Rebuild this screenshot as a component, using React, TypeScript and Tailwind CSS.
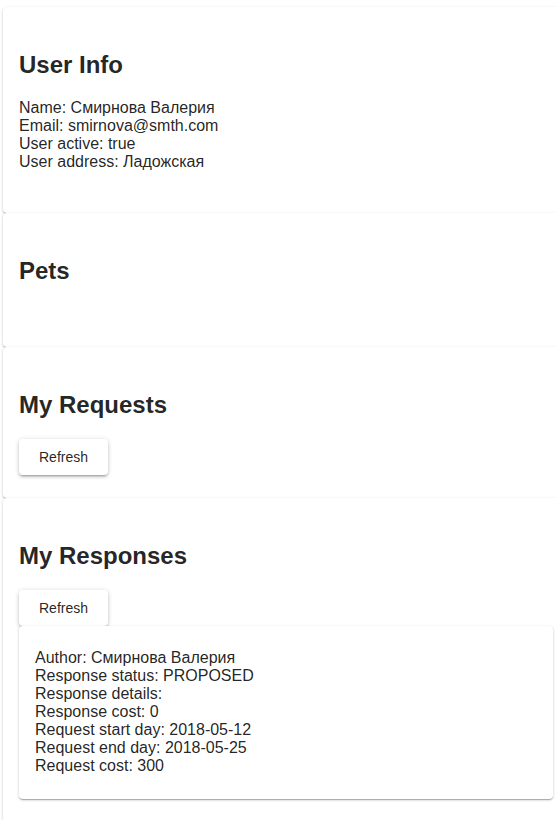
import React from 'react';

const paperShadow =
  'shadow-[0_1px_3px_0_rgba(0,0,0,0.2),0_1px_1px_0_rgba(0,0,0,0.14),0_2px_1px_-1px_rgba(0,0,0,0.12)]';

const user = {
  name: 'Смирнова Валерия',
  email: 'smirnova@smth.com',
  active: true,
  address: 'Ладожская',
};

const responses = [
  {
    author: 'Смирнова Валерия',
    status: 'PROPOSED',
    details: '',
    cost: 0,
    start: '2018-05-12',
    end: '2018-05-25',
    requestCost: 300,
  },
];

const Section: React.FC<{ title: string; pb?: string; children?: React.ReactNode }> = ({
  title,
  pb = 'pb-6',
  children,
}) => (
  <div className={`w-[566px] ml-[3px] bg-white rounded px-4 pt-6 ${pb} ${paperShadow}`}>
    <h2 className="my-5 text-[24px] font-bold leading-[normal]">{title}</h2>
    {children}
  </div>
);

const RefreshButton: React.FC = () => (
  <button
    className="h-9 min-w-16 px-5 bg-white rounded text-[14px] leading-[normal] text-[rgba(0,0,0,0.87)] shadow-[0_1px_5px_0_rgba(0,0,0,0.2),0_2px_2px_0_rgba(0,0,0,0.14),0_3px_1px_-2px_rgba(0,0,0,0.12)]"
  >
    Refresh
  </button>
);

export default function App() {
  return (
    <div className="w-full overflow-hidden bg-white pt-[7px] pb-8 text-[rgba(0,0,0,0.87)] font-['Liberation_Sans',Arial,sans-serif]">
      <Section title="User Info">
        <div className="mb-[18px] text-base leading-[normal]">
          <div>Name: {user.name}</div>
          <div>Email: {user.email}</div>
          <div>User active: {String(user.active)}</div>
          <div>User address: {user.address}</div>
        </div>
      </Section>

      <Section title="Pets">
        <div className="h-[18px]" />
      </Section>

      <Section title="My Requests" pb="pb-[23px]">
        <RefreshButton />
      </Section>

      <Section title="My Responses">
        <RefreshButton />
        {responses.map((r, i) => (
          <div
            key={i}
            className={`relative bg-white rounded px-4 pt-[23px] pb-6 text-base leading-[normal] ${paperShadow}`}
          >
            <div>Author: {r.author}</div>
            <div>Response status: {r.status}</div>
            <div>Response details: {r.details}</div>
            <div>Response cost: {r.cost}</div>
            <div>Request start day: {r.start}</div>
            <div>Request end day: {r.end}</div>
            <div>Request cost: {r.requestCost}</div>
          </div>
        ))}
      </Section>
    </div>
  );
}
